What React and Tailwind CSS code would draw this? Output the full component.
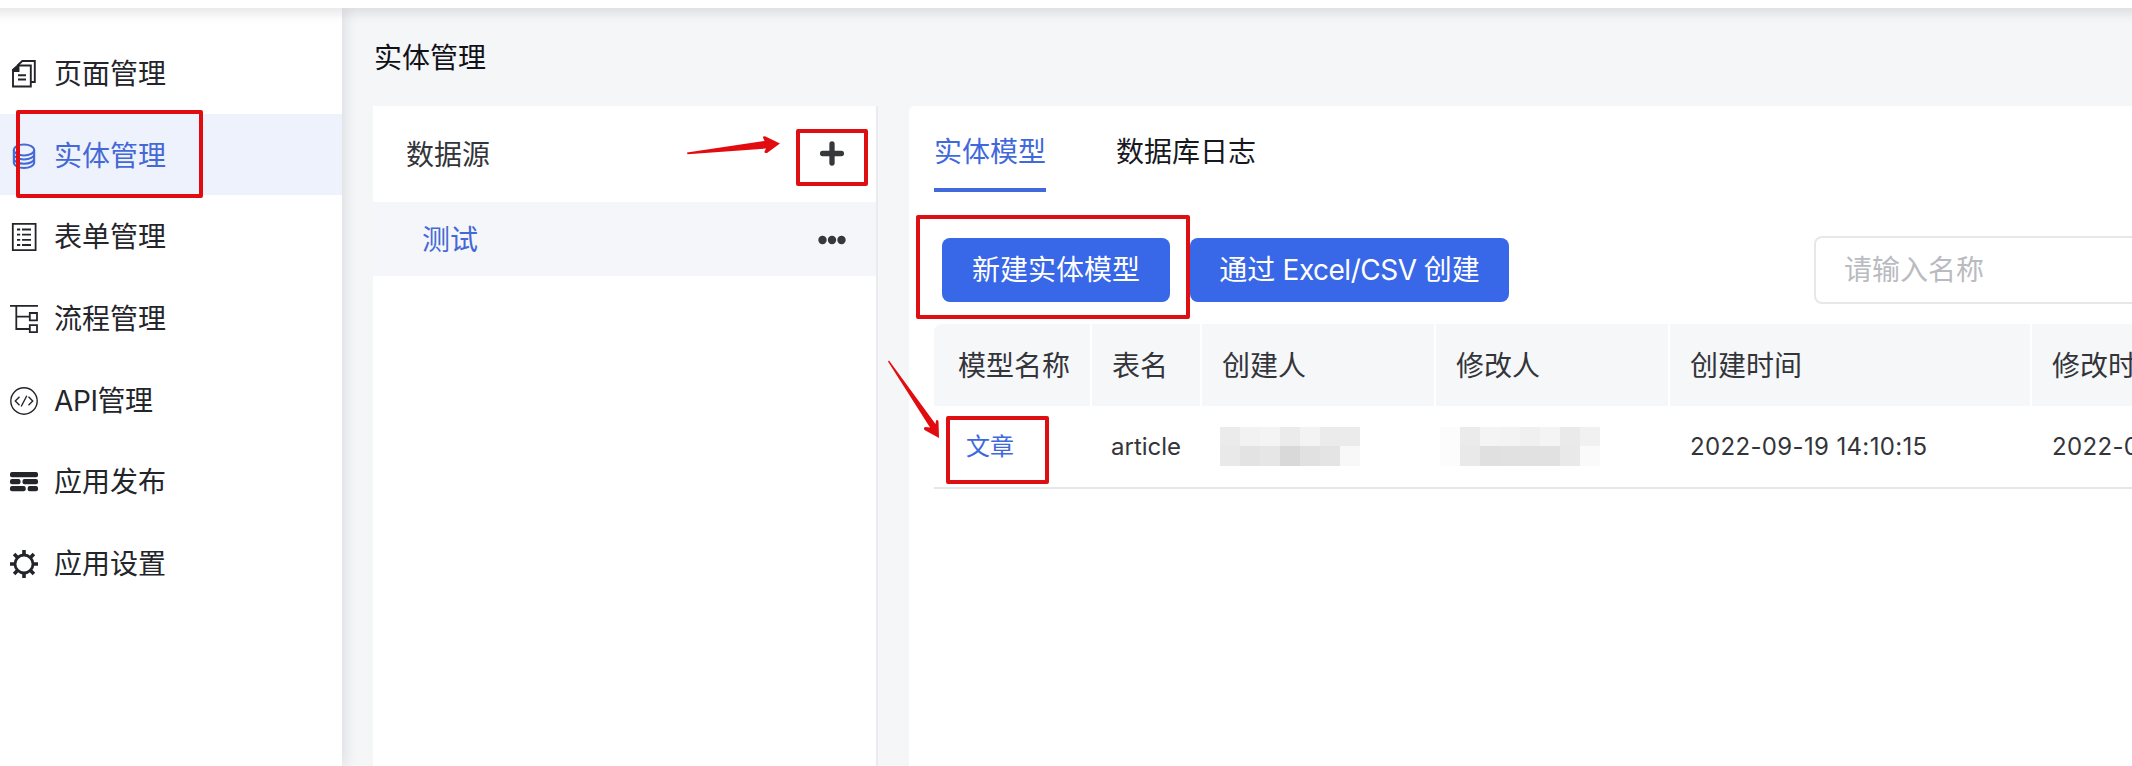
const MENU = [
  ['页面管理', PagesIcon],
  ['实体管理', DatabaseIcon],
  ['表单管理', FormIcon],
  ['流程管理', FlowIcon],
  ['API管理', ApiIcon],
  ['应用发布', BricksIcon],
  ['应用设置', GearIcon],
];

function PagesIcon() {
  return (
    <svg className="h-7 w-7" viewBox="0 0 28 28" fill="none" stroke="currentColor" strokeWidth="1.9">
      <path d="M3 10 8 5.500H20.800V26.500H3z" />
      <path d="M3 11h5.500V5.500L3 10z" fill="currentColor" />
      <path d="M7.500 5.500 12.300 1H24.800V22H21M8 15.300h8M8 19.500h8" />
    </svg>
  );
}

function DatabaseIcon() {
  return (
    <svg className="h-7 w-7" viewBox="0 0 28 28" fill="none" stroke="currentColor" strokeWidth="2">
      <ellipse cx="14" cy="8" rx="10.200" ry="5.500" />
      <path d="M3.800 8v12.500c0 3 4.500 5.500 10.200 5.500s10.200-2.500 10.200-5.500V8M3.800 12c0 3.200 4.500 5.500 10.200 5.500S24.200 15.200 24.200 12M3.800 16.300c0 3.200 4.500 5.500 10.200 5.500s10.200-2.300 10.200-5.500" />
    </svg>
  );
}

function FormIcon() {
  return (
    <svg className="h-7 w-7" viewBox="0 0 28 28" fill="none" stroke="currentColor" strokeWidth="1.800">
      <path d="M2.800 .9h22.800v26.200h-22.800z" />
      <path d="M7 6.500h3.200M12 6.500h9M7 11.700h3.200M12 11.700h9M7 16.800h3.200M12 16.800h9M7 22h3.200M12 22h9" />
    </svg>
  );
}

function FlowIcon() {
  return (
    <svg className="h-7 w-7" viewBox="0 0 28 28" fill="none" stroke="currentColor" strokeWidth="1.800">
      <path d="M0 .9h28M6.300 1v23h13M6.300 11.700h13M19.800 8h7.200v7.300h-7.200zM19.800 20.200h7.200v6.900h-7.200z" />
    </svg>
  );
}

function ApiIcon() {
  return (
    <svg className="h-7 w-7" viewBox="0 0 28 28" fill="none" stroke="currentColor" strokeWidth="1.400">
      <circle cx="14" cy="14" r="13.200" />
      <path d="M9.500 9.800 5.300 14l4.200 4.200M18.500 9.800l4.200 4.200-4.200 4.200M16.800 8.700l-5.600 10.800" />
    </svg>
  );
}

function BricksIcon() {
  return (
    <svg className="h-7 w-7" viewBox="0 0 28 28" fill="currentColor">
      <rect x="0" y="4" width="28" height="5.300" rx="2" />
      <rect x="0" y="11" width="10.500" height="5.300" rx="2" />
      <rect x="12.500" y="11" width="15.500" height="5.300" rx="2" />
      <rect x="0" y="18" width="15.700" height="5.300" rx="2" />
      <rect x="17.700" y="18" width="10.300" height="5.300" rx="2" />
    </svg>
  );
}

function GearIcon() {
  return (
    <svg className="h-7 w-7" viewBox="0 0 28 28" fill="none" stroke="currentColor">
      <circle cx="14" cy="14" r="9" strokeWidth="2.800" />
      <path strokeWidth="3.600" d="M14 0v5M14 23v5M0 14h5M23 14h5M4.100 4.100l3.600 3.600M20.300 20.300l3.600 3.600M4.100 23.900l3.600-3.600M20.300 7.700l3.600-3.600" />
    </svg>
  );
}

const MASK_A = [
  ['#ebebeb', '#f2f2f2', '#f4f4f4', '#ebebeb', '#f3f3f3', '#ebebeb', '#ebebeb'],
  ['#e9e9e9', '#e3e3e3', '#e6e6e6', '#d9d9d9', '#e1e1e1', '#e4e4e4', '#f8f8f8'],
];
const MASK_B = [
  ['#fcfcfc', '#ebebeb', '#f4f4f4', '#f3f3f3', '#f0f0f0', '#f4f4f4', '#eaeaea', '#f1f1f1'],
  ['#fcfcfc', '#e9e9e9', '#e0e0e0', '#e1e1e1', '#e1e1e1', '#e1e1e1', '#e9e9e9', '#fafafa'],
];

function Mosaic({ rows }) {
  return (
    <div className="flex flex-col">
      {rows.map((row, r) => (
        <div key={r} className="flex">
          {row.map((c, i) => (
            <span key={i} className={r === 0 ? 'h-[19px] w-5' : 'h-5 w-5'} style={{ backgroundColor: c }} />
          ))}
        </div>
      ))}
    </div>
  );
}

const COLS = 'grid grid-cols-[158px_110px_234px_234px_362px_300px]';

export default function App() {
  return (
    <div className="relative flex h-[766px] w-[2132px] flex-col overflow-hidden bg-[#f5f6f8] font-[Inter,'Noto_Sans_CJK_SC',sans-serif] text-[28px] leading-10 text-[#33353a]">
      <header className="z-20 -mx-5 h-2 shrink-0 bg-white shadow-[0_2px_14px_rgba(0,0,0,0.19)]" />
      <div className="flex min-h-0 flex-1">
        <nav className="z-10 w-[342px] shrink-0 bg-white pt-6 text-[#23252b] shadow-[2px_0_14px_rgba(0,21,41,0.12)]">
          {MENU.map(([label, Icon], i) => (
            <div
              key={label}
              className={
                i === 1
                  ? 'flex h-[81.6px] items-center gap-4 bg-[#eef2fd] pt-[3px] pl-2.5 text-[#4469d6]'
                  : 'flex h-[81.6px] items-center gap-4 pt-[3px] pl-2.5'
              }
            >
              <Icon />
              <span className={i === 4 ? 'tracking-[-0.4px]' : ''}>{label}</span>
            </div>
          ))}
        </nav>

        <main className="flex min-w-0 flex-1 flex-col pl-[31px]">
          <h1 className="mt-[30px] mb-7 pl-px text-[#101218]">实体管理</h1>
          <div className="flex min-h-0 flex-1">
            <section className="w-[505px] shrink-0 border-r-2 border-[#e9ebee] bg-white">
              <div className="flex h-24 items-center justify-between pr-[31px] pl-[33px]">
                <span className="pt-0.5">数据源</span>
                <svg className="h-[26px] w-[26px]" viewBox="0 0 26 26" stroke="#36383c" strokeWidth="5.300" strokeLinecap="round">
                  <path d="M13 3v19M3.600 12.500h18.800" />
                </svg>
              </div>
              <div className="flex h-[74px] items-center justify-between bg-[#f5f6fa] pr-[29px] pl-[49px]">
                <span className="pt-px text-[#4469d6]">测试</span>
                <svg className="h-3 w-[30px]" viewBox="0 0 30 12" fill="#36383c">
                  <circle cx="5.500" cy="7" r="4.200" />
                  <circle cx="15" cy="7" r="4.200" />
                  <circle cx="24.500" cy="7" r="4.200" />
                </svg>
              </div>
            </section>

            <section className="ml-[31px] min-w-0 flex-1 overflow-hidden rounded-tl-md bg-white pl-[25px]">
              <div className="flex h-[86px] gap-[70px] text-[#17191f]">
                <div className="flex h-[86px] items-center border-b-4 border-[#4169dc] pt-[9px] text-[#4169dc]">实体模型</div>
                <div className="flex h-[86px] items-center pt-[5px]">数据库日志</div>
              </div>
              <div className="mt-11 flex h-[68px] items-center pl-2">
                <button className="h-16 shrink-0 rounded-lg bg-[#3867e8] px-[30px] whitespace-nowrap text-white">新建实体模型</button>
                <button className="ml-5 h-16 w-[319px] shrink-0 rounded-lg bg-[#3867e8] text-center whitespace-nowrap text-white">
                  通过<span className="tracking-[-0.5px]"> Excel/CSV </span>创建
                </button>
                <div className="ml-[305px] flex h-[68px] w-[400px] shrink-0 items-center rounded-lg border-2 border-[#e6e7e9] pl-7 text-[#b9bbc0]">请输入名称</div>
              </div>
              <div className="mt-5 w-[1398px]">
                <div className={`${COLS} h-[82px] overflow-hidden rounded-tl-lg bg-[#f6f7f9]`}>
                  {['模型名称', '表名', '创建人', '修改人', '创建时间', '修改时间'].map((t, i) => (
                    <div
                      key={t}
                      className={i === 0 ? 'flex items-center border-r-2 border-white pt-px pl-6' : 'flex items-center border-r-2 border-white pt-px pl-5'}
                    >
                      {t}
                    </div>
                  ))}
                </div>
                <div className={`${COLS} h-[83px] items-center border-b-2 border-[#e6e7e9] text-[24px]`}>
                  <span className="pl-8 text-[#3f68dc]">文章</span>
                  <span className="pt-px pl-[19px]">article</span>
                  <span className="pl-[18px]"><Mosaic rows={MASK_A} /></span>
                  <span className="pl-[4px]"><Mosaic rows={MASK_B} /></span>
                  <span className="pt-px pl-5 tracking-[0.35px]">2022-09-19 14:10:15</span>
                  <span className="pt-px pl-5 tracking-[0.35px]">2022-09-19 14:10:15</span>
                </div>
              </div>
            </section>
          </div>
        </main>
      </div>

      <div className="absolute top-[110px] left-4 z-30 h-[88px] w-[187px] rounded-[2px] border-4 border-[#e20c10]" />
      <div className="absolute top-[129px] left-[796px] z-30 h-[57px] w-[72px] rounded-[2px] border-4 border-[#de0f13]" />
      <div className="absolute top-[215px] left-[916px] z-30 h-[104px] w-[274px] rounded-[2px] border-4 border-[#de0f13]" />
      <div className="absolute top-[416px] left-[946px] z-30 h-[68px] w-[103px] rounded-[2px] border-4 border-[#de0f13]" />
      <svg className="absolute top-[130px] left-[680px] z-30 h-[30px] w-[110px]" viewBox="680 130 110 30" fill="#e20c10">
        <path d="M687 152.500 764.500 141 763 137.500Q763 135.500 765.500 136.500L780 143.500 767 153Q764 153.500 764.500 151.500L766 148.500 687.500 154.300z" />
      </svg>
      <svg className="absolute top-[355px] left-[880px] z-30 h-[90px] w-[70px]" viewBox="880 355 70 90" fill="#e20c10">
        <path d="M889 360.500 935.500 424 936 420.500Q938 419 938.500 421.500L939 438 924.500 430Q923 427.500 925.500 427L930 427.500 888 361.500z" />
      </svg>
    </div>
  );
}
